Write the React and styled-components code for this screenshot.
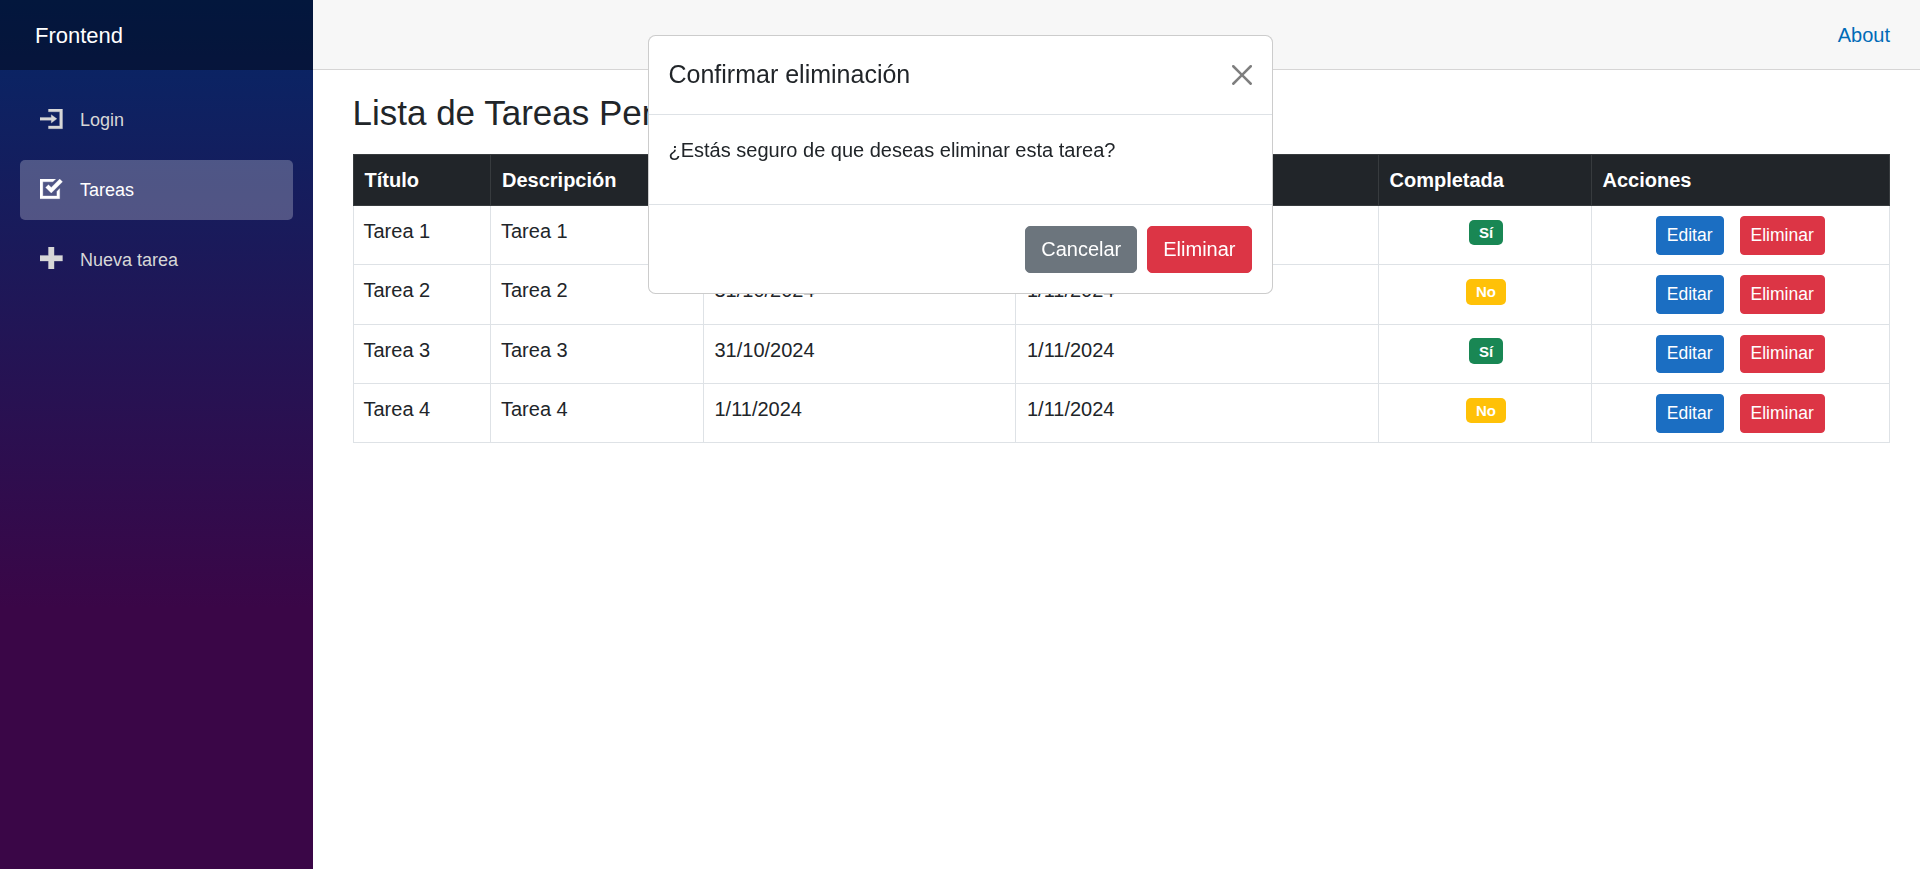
import React from "react";
import styled, { createGlobalStyle } from "styled-components";

const tasks = [
  { id: 1, title: "Tarea 1", desc: "Tarea 1", created: "31/10/2024", due: "1/11/2024", done: true },
  { id: 2, title: "Tarea 2", desc: "Tarea 2", created: "31/10/2024", due: "1/11/2024", done: false },
  { id: 3, title: "Tarea 3", desc: "Tarea 3", created: "31/10/2024", due: "1/11/2024", done: true },
  { id: 4, title: "Tarea 4", desc: "Tarea 4", created: "1/11/2024", due: "1/11/2024", done: false },
];

const columns = [
  { label: "Título", width: 137.5 },
  { label: "Descripción", width: 212.5 },
  { label: "Fecha de creación", width: 312.5 },
  { label: "Fecha de vencimiento", width: 362.5 },
  { label: "Completada", width: 213 },
  { label: "Acciones", width: 298.5 },
];

const App = () => {
  return (
    <Page>
      <GlobalStyle />
      <Sidebar>
        <Brand>Frontend</Brand>
        <Nav>
          <NavLink>
            <NavIcon viewBox="0 0 8 8">
              <path d="M3 0v1h4v5h-4v1h5v-7h-5zm1 2v1h-4v1h4v1l2-1.5-2-1.5z" />
            </NavIcon>
            Login
          </NavLink>
          <NavLink $active>
            <NavIcon viewBox="0 0 8 8">
              <path d="M0 0v7h7v-3.59l-1 1v1.59h-5v-5h3.59l1-1h-5.59zm7 0l-3 3-1-1-1 1 2 2 4-4-1-1z" />
            </NavIcon>
            Tareas
          </NavLink>
          <NavLink>
            <NavIcon viewBox="0 0 8 8" $raised>
              <path d="M3 0v3h-3v2h3v3h2v-3h3v-2h-3v-3h-2z" />
            </NavIcon>
            Nueva tarea
          </NavLink>
        </Nav>
      </Sidebar>
      <Main>
        <TopRow>
          <AboutLink>About</AboutLink>
        </TopRow>
        <Content>
          <Heading>Lista de Tareas Pendientes</Heading>
          <Table>
            <colgroup>
              {columns.map((col) => (
                <Col key={col.label} $width={col.width} />
              ))}
            </colgroup>
            <thead>
              <tr>
                {columns.map((col) => (
                  <Th key={col.label}>{col.label}</Th>
                ))}
              </tr>
            </thead>
            <tbody>
              {tasks.map((task) => (
                <tr key={task.id}>
                  <Td>{task.title}</Td>
                  <Td>{task.desc}</Td>
                  <DateTd>{task.created}</DateTd>
                  <DateTd>{task.due}</DateTd>
                  <BadgeTd>
                    <Badge $done={task.done}>{task.done ? "Sí" : "No"}</Badge>
                  </BadgeTd>
                  <Td>
                    <Actions>
                      <SmallButton $color="#1b6ec2">Editar</SmallButton>
                      <SmallButton $color="#dc3545">Eliminar</SmallButton>
                    </Actions>
                  </Td>
                </tr>
              ))}
            </tbody>
          </Table>
        </Content>
      </Main>
      <Modal>
        <ModalHeader>
          <ModalTitle>Confirmar eliminación</ModalTitle>
          <CloseIcon viewBox="0 0 16 16">
            <path d="M.293.293a1 1 0 0 1 1.414 0L8 6.586 14.293.293a1 1 0 1 1 1.414 1.414L9.414 8l6.293 6.293a1 1 0 0 1-1.414 1.414L8 9.414l-6.293 6.293a1 1 0 0 1-1.414-1.414L6.586 8 .293 1.707a1 1 0 0 1 0-1.414z" />
          </CloseIcon>
        </ModalHeader>
        <ModalBody>¿Estás seguro de que deseas eliminar esta tarea?</ModalBody>
        <ModalFooter>
          <ModalButton $color="#6c757d">Cancelar</ModalButton>
          <ModalButton $color="#dc3545">Eliminar</ModalButton>
        </ModalFooter>
      </Modal>
    </Page>
  );
};

export default App;

const GlobalStyle = createGlobalStyle`
  * {
    box-sizing: border-box;
  }
  body {
    margin: 0;
    background: #fff;
    color: #212529;
    font-family: "Liberation Sans", Arial, sans-serif;
    font-size: 20px;
    line-height: 1.5;
  }
`;

const Page = styled.div`
  display: flex;
  min-height: 100vh;
`;

const Sidebar = styled.div`
  width: 312.5px;
  flex-shrink: 0;
  background-image: linear-gradient(180deg, rgb(5, 39, 103) 0%, #3a0647 70%);
`;

const Brand = styled.div`
  height: 70px;
  display: flex;
  align-items: center;
  padding-left: 35px;
  background: rgba(0, 0, 0, 0.4);
  color: #fff;
  font-size: 22px;
`;

const Nav = styled.nav`
  display: flex;
  flex-direction: column;
  gap: 10px;
  padding: 20px 20px 0;
`;

const NavLink = styled.a`
  height: 60px;
  display: flex;
  align-items: center;
  padding-left: 20px;
  border-radius: 5px;
  font-size: 18px;
  color: ${(p) => (p.$active ? "#fff" : "#d7d7d7")};
  background: ${(p) => (p.$active ? "rgba(255, 255, 255, 0.25)" : "transparent")};
`;

const NavIcon = styled.svg`
  width: 22.5px;
  height: 22.5px;
  margin-right: 17.5px;
  margin-top: ${(p) => (p.$raised ? "-4px" : "1px")};
  fill: currentColor;
  stroke: currentColor;
  stroke-width: 0.1;
`;

const Main = styled.div`
  flex: 1;
  min-width: 0;
`;

const TopRow = styled.div`
  height: 70px;
  display: flex;
  align-items: center;
  justify-content: flex-end;
  padding-right: 30px;
  background: #f7f7f7;
  border-bottom: 1px solid #d6d5d5;
`;

const AboutLink = styled.a`
  color: #006bb7;
`;

const Content = styled.div`
  padding: 22px 30px 0 40px;
`;

const Heading = styled.h3`
  margin: 0 0 20px;
  font-size: 35px;
  font-weight: 500;
  line-height: 1.2;
`;

const Table = styled.table`
  width: 1536.5px;
  table-layout: fixed;
  border-collapse: collapse;
`;

const Col = styled.col`
  width: ${(p) => p.$width}px;
`;

const Th = styled.th`
  padding: 10px 10px 10px 11px;
  height: 51px;
  background: #212529;
  color: #fff;
  border: 1px solid #373b3e;
  font-weight: 700;
  text-align: left;
  vertical-align: top;
`;

const Td = styled.td`
  padding: 10px 10px 9.5px;
  border: 1px solid #dee2e6;
  vertical-align: top;
`;

const DateTd = styled(Td)`
  padding-left: 11px;
`;

const BadgeTd = styled(Td)`
  padding-left: 13px;
  text-align: center;
`;

const Actions = styled.div`
  display: flex;
  justify-content: center;
  gap: 16px;
`;

const SmallButton = styled.button`
  height: 38.75px;
  padding: 0 10px;
  border: 1px solid ${(p) => p.$color};
  border-radius: 4px;
  background: ${(p) => p.$color};
  color: #fff;
  font-family: inherit;
  font-size: 17.5px;
`;

const Badge = styled.span`
  display: inline-block;
  padding: 5.25px 9.75px;
  border-radius: 5px;
  background: ${(p) => (p.$done ? "#198754" : "#ffc107")};
  color: #fff;
  font-size: 15px;
  font-weight: 700;
  line-height: 1;
`;

const Modal = styled.div`
  position: fixed;
  top: 35px;
  left: 647.5px;
  width: 625px;
  background: #fff;
  border: 1px solid rgba(0, 0, 0, 0.2);
  border-radius: 7.5px;
`;

const ModalHeader = styled.div`
  display: flex;
  align-items: center;
  justify-content: space-between;
  padding: 20px;
  border-bottom: 1px solid #dee2e6;
`;

const ModalTitle = styled.h5`
  margin: 0;
  font-size: 25px;
  font-weight: 500;
  line-height: 1.5;
`;

const CloseIcon = styled.svg`
  width: 20px;
  height: 20px;
  fill: #000;
  opacity: 0.5;
`;

const ModalBody = styled.div`
  padding: 20px 20px 39.5px;
`;

const ModalFooter = styled.div`
  display: flex;
  justify-content: flex-end;
  gap: 10px;
  padding: 20.5px 20px 20px;
  border-top: 1px solid #dee2e6;
`;

const ModalButton = styled.button`
  height: 47.5px;
  padding: 0 15px;
  border: 1px solid ${(p) => p.$color};
  border-radius: 5px;
  background: ${(p) => p.$color};
  color: #fff;
  font-family: inherit;
  font-size: 20px;
`;
